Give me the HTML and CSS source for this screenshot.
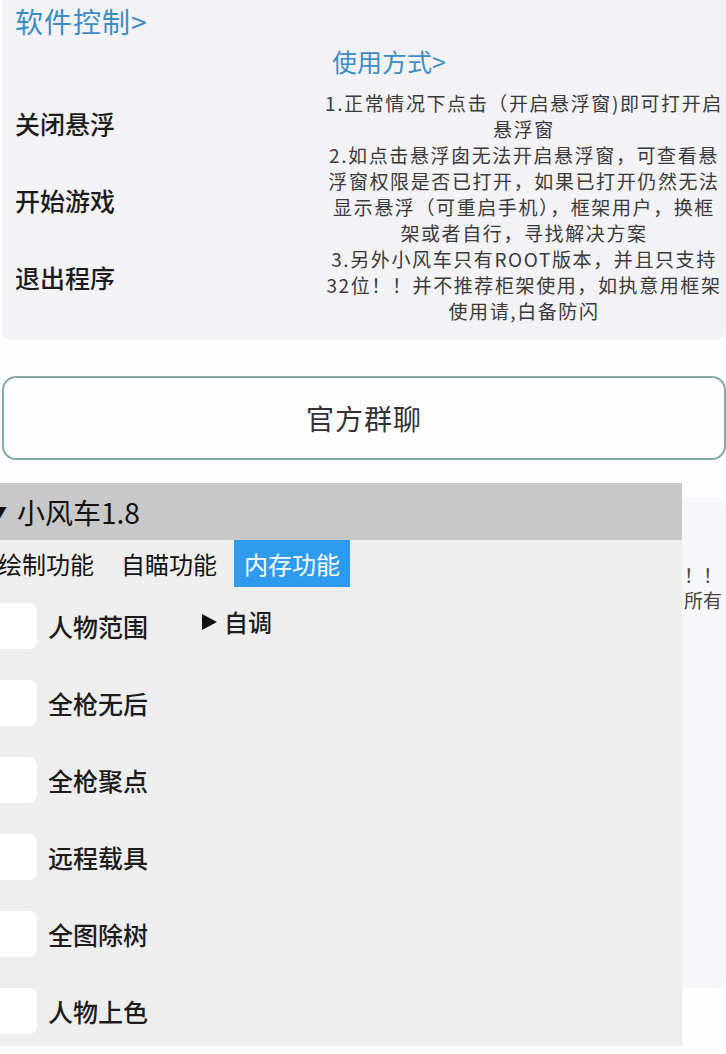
FILE: index.html
```html
<!DOCTYPE html>
<html lang="zh-CN">
<head>
  <meta charset="UTF-8">
  <meta name="viewport" content="width=device-width, initial-scale=1.0">
  <title>小风车</title>
  <link rel="stylesheet" href="styles.css">
</head>
<body>

  <div class="page">
    <section class="panel control">
      <h2 class="panel-title">软件控制&gt;</h2>
      <div class="panel-body">
        <ul class="actions">
          <li>关闭悬浮</li>
          <li>开始游戏</li>
          <li>退出程序</li>
        </ul>
        <div class="usage">
          <h3 class="usage-title">使用方式&gt;</h3>
          <p class="usage-text">1.正常情况下点击（开启悬浮窗)即可打开启<br>悬浮窗<br>2.如点击悬浮囱无法开启悬浮窗，可查看悬<br>浮窗权限是否已打开，如果已打开仍然无法<br>显示悬浮（可重启手机），框架用户，换框<br>架或者自行，寻找解决方案<br>3.另外小风车只有ROOT版本，并且只支持<br>32位！！并不推荐柜架使用，如执意用框架<br>使用请,白备防闪</p>
        </div>
      </div>
    </section>

    <button class="group-btn">官方群聊</button>

    <section class="panel notice">
      <p class="notice-text">！！<br>所有</p>
    </section>
  </div>

  <!-- floating menu window -->
  <div class="menu">
    <div class="menu-head"><span class="arrow">▼</span>小风车1.8</div>
    <div class="tabs">
      <span class="tab">绘制功能</span>
      <span class="tab">自瞄功能</span>
      <span class="tab active">内存功能</span>
    </div>
    <ul class="options">
      <li><span class="check"></span>人物范围<span class="sub"><i class="tri"></i>自调</span></li>
      <li><span class="check"></span>全枪无后</li>
      <li><span class="check"></span>全枪聚点</li>
      <li><span class="check"></span>远程载具</li>
      <li><span class="check"></span>全图除树</li>
      <li><span class="check"></span>人物上色</li>
    </ul>
  </div>

</body>
</html>
```

FILE: styles.css
```css
body {
  margin: 0;
  height: 1054px;
  background: #fdfcfe;
  font-family: 'Noto Sans CJK SC', 'Noto Sans', sans-serif;
  color: #222;
  overflow: hidden;
  position: relative;
}

.page {
  padding-left: 2px;
}

.panel {
  background: #f3f2f5;
  border-radius: 0 0 10px 10px;
}

/* top control card */
.control {
  padding: 5px 0 16px 13px;
}

.panel-title {
  margin: 0;
  font-size: 28px;
  font-weight: 400;
  line-height: 32px;
  letter-spacing: 1px;
  color: #3c8dc5;
}

.panel-body {
  display: grid;
  grid-template-columns: 1fr 404px;
}

.actions {
  list-style: none;
  margin: 0;
  padding: 71px 0 0 0;
  display: flex;
  flex-direction: column;
  gap: 47px;
}

.actions li {
  font-size: 25px;
  line-height: 30px;
  font-weight: 500;
  color: #1c1c1c;
}

.usage-title {
  margin: 9px 0 0 10px;
  font-size: 25px;
  font-weight: 400;
  line-height: 30px;
  color: #3c8dc5;
}

.usage-text {
  margin: 14px 0 0 0;
  font-size: 19px;
  line-height: 26px;
  letter-spacing: 1.6px;
  text-align: center;
  white-space: nowrap;
  color: #3a3a3a;
}

.group-btn {
  display: block;
  width: 724px;
  height: 84px;
  margin-top: 36px;
  background: #fefefe;
  border: 2px solid #86aba7;
  border-radius: 14px;
  font-family: inherit;
  font-size: 28px;
  letter-spacing: 1px;
  color: #333;
}

/* card behind the floating window */
.notice {
  margin-top: 37px;
  height: 491px;
  border-radius: 10px;
  background: #f7f6f8;
  padding-top: 65px;
  box-sizing: border-box;
}

.notice-text {
  margin: 0 0 0 682px;
  font-size: 19px;
  line-height: 25px;
  color: #444;
}

/* floating window */
.menu {
  position: absolute;
  top: 483px;
  left: -12px;
  width: 694px;
  height: 563px;
  background: #efeeef;
}

.menu-head {
  height: 57px;
  background: #c9c8c9;
  padding-left: 3px;
  display: flex;
  align-items: center;
  font-size: 28px;
  color: #111;
}

.arrow {
  font-size: 16px;
  margin-right: 10px;
}

.tabs {
  display: flex;
  gap: 7px;
  height: 47px;
  align-items: stretch;
}

.tab {
  display: flex;
  align-items: center;
  padding: 0 10px;
  font-size: 24px;
  color: #111;
}

.tab.active {
  background: #2f9bef;
  color: #fff;
}

.options {
  list-style: none;
  margin: 16px 0 0 0;
  padding: 0 0 0 3px;
  display: flex;
  flex-direction: column;
  gap: 31px;
}

.options li {
  display: flex;
  align-items: center;
  height: 46px;
  font-size: 25px;
  font-weight: 500;
  color: #1c1c1c;
}

.check {
  width: 46px;
  height: 46px;
  background: #fff;
  border-radius: 8px;
  margin-right: 11px;
}

.sub {
  align-self: flex-start;
  display: flex;
  align-items: center;
  margin: 0 0 0 54px;
  font-size: 24px;
  line-height: 38px;
}

/* small right-pointing triangle */
.tri {
  width: 0;
  height: 0;
  border-top: 8px solid transparent;
  border-bottom: 8px solid transparent;
  border-left: 15px solid #111;
  margin-right: 7px;
}
```
